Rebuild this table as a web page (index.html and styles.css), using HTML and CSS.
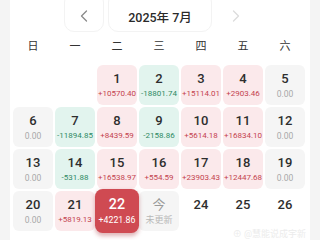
FILE: index.html
```html
<!DOCTYPE html>
<html lang="zh">
<head>
<meta charset="utf-8">
<link rel="stylesheet" href="styles.css">
</head>
<body>
<div class="panel">
  <div class="header">
    <div class="nav prev">
      <svg width="8" height="12" viewBox="0 0 8 12"><path d="M6.5 1 L1.5 6 L6.5 11" fill="none" stroke="#8a8a8a" stroke-width="1.3" stroke-linecap="round" stroke-linejoin="round"/></svg>
    </div>
    <div class="month">2025年 7月</div>
    <div class="nav next">
      <svg width="8" height="12" viewBox="0 0 8 12"><path d="M1.5 1 L6.5 6 L1.5 11" fill="none" stroke="#dcdcdc" stroke-width="1.3" stroke-linecap="round" stroke-linejoin="round"/></svg>
    </div>
  </div>
  <div class="weekdays">
    <span>日</span><span>一</span><span>二</span><span>三</span><span>四</span><span>五</span><span>六</span>
  </div>
  <div class="grid">
    <div class="cell empty"></div>
    <div class="cell empty"></div>
    <div class="cell up"><div class="d">1</div><div class="a">+10570.40</div></div>
    <div class="cell down"><div class="d">2</div><div class="a">-18801.74</div></div>
    <div class="cell up"><div class="d">3</div><div class="a">+15114.01</div></div>
    <div class="cell up"><div class="d">4</div><div class="a">+2903.46</div></div>
    <div class="cell zero"><div class="d">5</div><div class="a">0.00</div></div>

    <div class="cell zero"><div class="d">6</div><div class="a">0.00</div></div>
    <div class="cell down"><div class="d">7</div><div class="a">-11894.85</div></div>
    <div class="cell up"><div class="d">8</div><div class="a">+8439.59</div></div>
    <div class="cell down"><div class="d">9</div><div class="a">-2158.86</div></div>
    <div class="cell up"><div class="d">10</div><div class="a">+5614.18</div></div>
    <div class="cell up"><div class="d">11</div><div class="a">+16834.10</div></div>
    <div class="cell zero"><div class="d">12</div><div class="a">0.00</div></div>

    <div class="cell zero"><div class="d">13</div><div class="a">0.00</div></div>
    <div class="cell down"><div class="d">14</div><div class="a">-531.88</div></div>
    <div class="cell up"><div class="d">15</div><div class="a">+16538.97</div></div>
    <div class="cell up"><div class="d">16</div><div class="a">+554.59</div></div>
    <div class="cell up"><div class="d">17</div><div class="a">+23903.43</div></div>
    <div class="cell up"><div class="d">18</div><div class="a">+12447.68</div></div>
    <div class="cell zero"><div class="d">19</div><div class="a">0.00</div></div>

    <div class="cell zero"><div class="d">20</div><div class="a">0.00</div></div>
    <div class="cell up"><div class="d">21</div><div class="a">+5819.13</div></div>
    <div class="cell sel"><div class="d">22</div><div class="a">+4221.86</div></div>
    <div class="cell today"><div class="d">今</div><div class="a">未更新</div></div>
    <div class="cell plain"><div class="d">24</div></div>
    <div class="cell plain"><div class="d">25</div></div>
    <div class="cell plain"><div class="d">26</div></div>
  </div>
  <div class="mark">⊕ @慧能说成宇新</div>
</div>
</body>
</html>
```

FILE: styles.css
```css
html, body {
  margin: 0;
  padding: 0;
  background: #f4f4f4;
  height: 240px;
  overflow: hidden;
}
body {
  font-family: Roboto, "Noto Sans CJK SC", sans-serif;
}
.panel {
  position: relative;
  margin: 0 10px;
  width: 300px;
  height: 240px;
  background: #ffffff;
  overflow: hidden;
}
.header {
  display: flex;
  justify-content: center;
  gap: 4px;
  height: 33px;
}
.nav, .month {
  height: 40px;
  margin-top: -8px;
  box-sizing: border-box;
  border-radius: 10px;
  display: flex;
  align-items: center;
  justify-content: center;
  padding-top: 8px;
}
.nav {
  width: 40px;
}
.prev {
  border: 1px solid #f3f3f3;
}
.month {
  width: 104px;
  border: 1px solid #f3f3f3;
  font-size: 12.5px;
  font-weight: 500;
  color: #2a2a2a;
}
.weekdays {
  display: grid;
  grid-template-columns: repeat(7, 40px);
  column-gap: 2px;
  padding-left: 3px;
  margin-top: 4px;
  height: 20px;
  line-height: 20px;
  font-size: 11px;
  color: #333;
  text-align: center;
}
.grid {
  display: grid;
  grid-template-columns: repeat(7, 40px);
  grid-auto-rows: 40px;
  gap: 2px;
  padding-left: 3px;
  margin-top: 8px;
}
.cell {
  border-radius: 6px;
  text-align: center;
  padding-top: 5px;
  box-sizing: border-box;
}
.d {
  font-size: 13px;
  font-weight: 500;
  line-height: 18px;
  color: #2e2e2e;
}
.a {
  font-size: 8px;
  line-height: 10px;
  margin-top: 1px;
  white-space: nowrap;
}
.up { background: #fbe9eb; }
.up .a { color: #c4434f; }
.down { background: #e2f4ee; }
.down .a { color: #2f8a64; }
.zero { background: #f5f5f5; }
.zero .a { color: #a8a8a8; font-size: 8.5px; }
.today { background: #f5f5f5; }
.today .d { color: #9a9a9a; font-weight: 400; }
.today .a { color: #b8b8b8; font-size: 9px; }
.sel {
  background: #cf4a52;
  transform: scale(1.1);
  border-radius: 7px;
  box-shadow: 0 2px 4px rgba(160, 40, 50, 0.35);
}
.sel .d, .sel .a { color: #ffffff; }
.mark {
  position: absolute;
  right: 4px;
  bottom: 0px;
  font-size: 9px;
  color: #ececec;
}
```
